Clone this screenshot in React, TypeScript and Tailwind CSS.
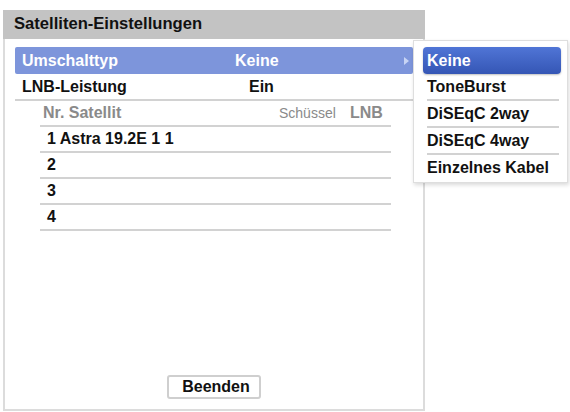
import React from "react";

const Line = ({ cls }: { cls: string }) => <div className={`h-[2px] bg-[#d2d2d2] ${cls}`} />;

export default function App() {
  const rows = ["1 Astra 19.2E 1 1", "2", "3", "4"];
  const opts = ["ToneBurst", "DiSEqC 2way", "DiSEqC 4way", "Einzelnes Kabel"];
  return (
    <div
      className="relative w-[570px] h-[412px] bg-white overflow-hidden text-[16px] font-bold text-[#111]"
      style={{ fontFamily: '"Liberation Sans", Arial, sans-serif' }}
    >
      <div className="ml-[3px] mt-[10px] w-[422px] h-[401px] flex flex-col border-x-2 border-b-2 border-[#dcdcdc]">
        <div className="h-[29px] bg-[#c3c3c3] flex items-center pl-[11px] -mx-[2px] text-[16.6px]">
          Satelliten-Einstellungen
        </div>
        <div className="flex flex-col pl-[10px] pr-[10px] mt-[8px]">
          <div className="h-[27px] bg-[#7d95db] rounded-[2px] flex items-center text-white pl-[7px]">
            <span className="w-[213px]">Umschalttyp</span>
            <span>Keine</span>
            <span className="ml-auto mr-[4px] w-0 h-0 border-y-[4px] border-y-transparent border-l-[5px] border-l-[#c8d4f4]" />
          </div>
          <div className="h-[25px] flex items-center pl-[7px]">
            <span className="w-[227px]">LNB-Leistung</span>
            <span>Ein</span>
          </div>
          <Line cls="" />
          <div className="h-[24px] flex items-center pl-[28px] pr-[12px] text-[#8a8a8a]">
            <span className="w-[236px]">Nr. Satellit</span>
            <span className="font-normal text-[14px] w-[71px]">Schüssel</span>
            <span>LNB</span>
          </div>
          <div className="pl-[25px] pr-[22px] flex flex-col">
            <Line cls="" />
            {rows.map((r) => (
              <React.Fragment key={r}>
                <div className="h-[24px] flex items-center pl-[7px]">{r}</div>
                <Line cls="" />
              </React.Fragment>
            ))}
          </div>
        </div>
        <div className="flex-1" />
        <div className="flex justify-center mb-[10px]">
          <div className="w-[94px] h-[24px] border-2 border-[#cfcfcf] rounded-[3px] flex items-center justify-center pl-[4px] bg-white">
            Beenden
          </div>
        </div>
      </div>

      <div className="absolute left-[413px] top-[40px] w-[155px] h-[143px] bg-white border border-[#dedede] shadow-[1px_2px_4px_rgba(0,0,0,0.15)] pt-[6px] pl-[9px] pr-[6px] flex flex-col">
        <div className="h-[27px] rounded-[4px] bg-gradient-to-b from-[#5075d6] to-[#3556b5] text-white flex items-center pl-[4px] shadow-[0_1px_2px_rgba(0,0,0,0.25)]">
          Keine
        </div>
        {opts.map((o, i) => (
          <React.Fragment key={o}>
            <div className="h-[25px] flex items-center pl-[4px]">{o}</div>
            {i < opts.length - 1 && <Line cls="ml-[4px] mr-[2px]" />}
          </React.Fragment>
        ))}
      </div>
    </div>
  );
}
